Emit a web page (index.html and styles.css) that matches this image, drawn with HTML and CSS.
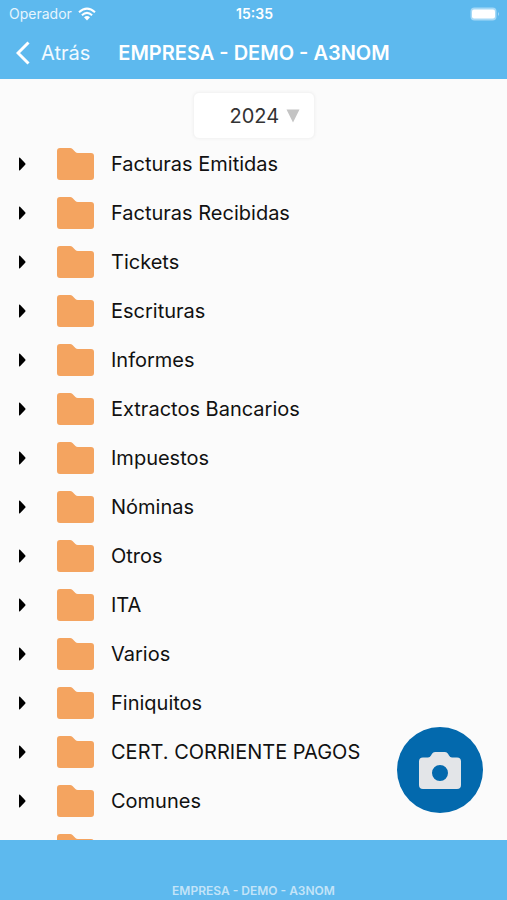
FILE: index.html
```html
<!DOCTYPE html>
<html lang="es">

<head>
    <meta charset="UTF-8">
    <meta name="viewport" content="width=device-width, initial-scale=1.0">
    <title>EMPRESA - DEMO - A3NOM</title>

    <link rel="stylesheet" href="styles.css">
</head>

<body>

    <svg class="sprite" aria-hidden="true">
        <symbol id="arrow" viewBox="0 0 8 14">
            <path d="M1 1.2Q1 0 2 0.8L7.2 6.2Q8 7 7.2 7.8L2 13.2Q1 14 1 12.8Z" />
        </symbol>
        <symbol id="folder" viewBox="0 0 37 32">
            <path d="M3 0H13Q14.5 0 15.5 1L18.4 4Q19.4 5 20.8 5H34Q37 5 37 8V29Q37 32 34 32H3Q0 32 0 29V3Q0 0 3 0Z" />
        </symbol>
    </svg>

    <header class="header">
        <div class="status">
            <div class="carrier">
                <span>Operador</span>
                <svg class="wifi" viewBox="0 0 18 14" aria-hidden="true">
                    <path d="M1 5.2Q9 -2 17 5.2M3.9 8.2Q9 3.6 14.1 8.2" />
                    <path class="wifi-dot" d="M6 10.2Q9 7.6 12 10.2L9 13.4Z" />
                </svg>
            </div>
            <span class="time">15:35</span>
            <svg class="battery" viewBox="0 0 30 14" aria-hidden="true">
                <rect class="battery-case" x="0.5" y="0.5" width="26" height="13" rx="4" />
                <rect x="2" y="2.5" width="23" height="9" rx="2" />
                <path class="battery-tip" d="M28 5Q30 7 28 9Z" />
            </svg>
        </div>
        <div class="navbar">
            <a href="#" class="back">
                <svg class="chevron" viewBox="0 0 14 24" aria-hidden="true">
                    <path d="M12.5 1.5L2 12L12.5 22.5" />
                </svg>
                Atrás
            </a>
            <h1 class="title">EMPRESA - DEMO - A3NOM</h1>
        </div>
    </header>

    <main class="content">
        <div class="year">
            <select class="year-select" aria-label="Año">
                <option>2024</option>
            </select>
            <svg class="year-arrow" viewBox="0 0 14 14" aria-hidden="true">
                <path d="M0.5 0.5H13.5L7 13.5Z" />
            </svg>
        </div>

        <ul class="folders">
            <li><button class="row"><svg class="arrow"><use href="#arrow" /></svg><svg class="folder"><use href="#folder" /></svg>Facturas Emitidas</button></li>
            <li><button class="row"><svg class="arrow"><use href="#arrow" /></svg><svg class="folder"><use href="#folder" /></svg>Facturas Recibidas</button></li>
            <li><button class="row"><svg class="arrow"><use href="#arrow" /></svg><svg class="folder"><use href="#folder" /></svg>Tickets</button></li>
            <li><button class="row"><svg class="arrow"><use href="#arrow" /></svg><svg class="folder"><use href="#folder" /></svg>Escrituras</button></li>
            <li><button class="row"><svg class="arrow"><use href="#arrow" /></svg><svg class="folder"><use href="#folder" /></svg>Informes</button></li>
            <li><button class="row"><svg class="arrow"><use href="#arrow" /></svg><svg class="folder"><use href="#folder" /></svg>Extractos Bancarios</button></li>
            <li><button class="row"><svg class="arrow"><use href="#arrow" /></svg><svg class="folder"><use href="#folder" /></svg>Impuestos</button></li>
            <li><button class="row"><svg class="arrow"><use href="#arrow" /></svg><svg class="folder"><use href="#folder" /></svg>Nóminas</button></li>
            <li><button class="row"><svg class="arrow"><use href="#arrow" /></svg><svg class="folder"><use href="#folder" /></svg>Otros</button></li>
            <li><button class="row"><svg class="arrow"><use href="#arrow" /></svg><svg class="folder"><use href="#folder" /></svg>ITA</button></li>
            <li><button class="row"><svg class="arrow"><use href="#arrow" /></svg><svg class="folder"><use href="#folder" /></svg>Varios</button></li>
            <li><button class="row"><svg class="arrow"><use href="#arrow" /></svg><svg class="folder"><use href="#folder" /></svg>Finiquitos</button></li>
            <li><button class="row"><svg class="arrow"><use href="#arrow" /></svg><svg class="folder"><use href="#folder" /></svg>CERT. CORRIENTE PAGOS</button></li>
            <li><button class="row"><svg class="arrow"><use href="#arrow" /></svg><svg class="folder"><use href="#folder" /></svg>Comunes</button></li>
            <li><button class="row"><svg class="arrow"><use href="#arrow" /></svg><svg class="folder"><use href="#folder" /></svg></button></li>
        </ul>
    </main>

    <button class="camera" aria-label="Cámara">
        <svg viewBox="0 0 42 37" aria-hidden="true">
            <path fill-rule="evenodd" d="M4 5.5H9Q11 5.5 12 3.5L13 1.8Q14 0 16 0H26Q28 0 29 1.8L30 3.5Q31 5.5 33 5.5H38Q42 5.5 42 9.5V33Q42 37 38 37H4Q0 37 0 33V9.5Q0 5.5 4 5.5ZM21 13A8 8 0 1 0 21 29A8 8 0 1 0 21 13Z" />
        </svg>
    </button>

    <footer class="footer">EMPRESA - DEMO - A3NOM</footer>

</body>

</html>
```

FILE: styles.css
```css
* {
    margin: 0;
    padding: 0;
    box-sizing: border-box;
    font-family: Inter, 'Liberation Sans', sans-serif;
}

body {
    display: flex;
    flex-direction: column;
    height: 100vh;
    overflow: hidden;
    background: #fbfbfb;
    color: #111;
}

.sprite {
    position: absolute;
    width: 0;
    height: 0;
}

.header {
    flex: none;
    background: #5db9ee;
    color: #fff;
}

.status {
    display: grid;
    grid-template-columns: 1fr auto 1fr;
    align-items: center;
    height: 27px;
    padding: 0 7px 0 9px;
    font-size: 14px;
}

.carrier {
    display: flex;
    align-items: center;
    gap: 6px;
    color: #e6f5fd;
}

.wifi {
    width: 18px;
    height: 14px;
    fill: none;
    stroke: #fff;
    stroke-width: 2;
}

.wifi-dot {
    fill: #fff;
    stroke: none;
}

.time {
    font-weight: 600;
}

.battery {
    justify-self: end;
    width: 30px;
    height: 14px;
    fill: #fff;
}

.battery-case,
.battery-tip {
    fill: #a6d9f6;
}

.navbar {
    display: flex;
    align-items: center;
    gap: 28px;
    height: 52px;
    padding: 0 16px;
}

.back {
    display: flex;
    align-items: center;
    gap: 11px;
    color: #f2faff;
    font-size: 20px;
    text-decoration: none;
}

.chevron {
    width: 14px;
    height: 24px;
    fill: none;
    stroke: #fff;
    stroke-width: 3;
}

.title {
    font-size: 20px;
    font-weight: 600;
    white-space: nowrap;
}

.content {
    flex: 1;
    min-height: 0;
    overflow: hidden;
}

.year {
    position: relative;
    width: 122px;
    margin: 13px auto 0;
}

.year-select {
    display: block;
    width: 100%;
    height: 47px;
    padding-left: 36px;
    appearance: none;
    background: #fff;
    border: 1px solid #f4f4f4;
    border-radius: 6px;
    box-shadow: 0 0 3px #f0f0f0;
    color: #333;
    font-size: 20px;
}

.year-arrow {
    position: absolute;
    top: 17px;
    right: 15px;
    width: 14px;
    height: 14px;
    fill: #c4c4c4;
    pointer-events: none;
}

.folders {
    list-style: none;
}

.row {
    display: flex;
    align-items: center;
    width: 100%;
    height: 49px;
    padding: 0 18px;
    background: none;
    border: none;
    color: #111;
    font-size: 20px;
    text-align: left;
}

.arrow {
    width: 8px;
    height: 14px;
    margin-right: 31px;
    fill: #000;
}

.folder {
    width: 37px;
    height: 32px;
    margin-right: 17px;
    fill: #f4a460;
}

.camera {
    position: fixed;
    right: 24px;
    bottom: 87px;
    display: flex;
    align-items: center;
    justify-content: center;
    width: 86px;
    height: 86px;
    background: #0369ad;
    border: none;
    border-radius: 50%;
}

.camera svg {
    width: 42px;
    height: 37px;
    fill: #e3e5e8;
}

.footer {
    flex: none;
    height: 60px;
    padding-top: 43px;
    background: #5db9ee;
    color: #c3e4f8;
    font-size: 12px;
    font-weight: 600;
    line-height: 16px;
    text-align: center;
}
```
